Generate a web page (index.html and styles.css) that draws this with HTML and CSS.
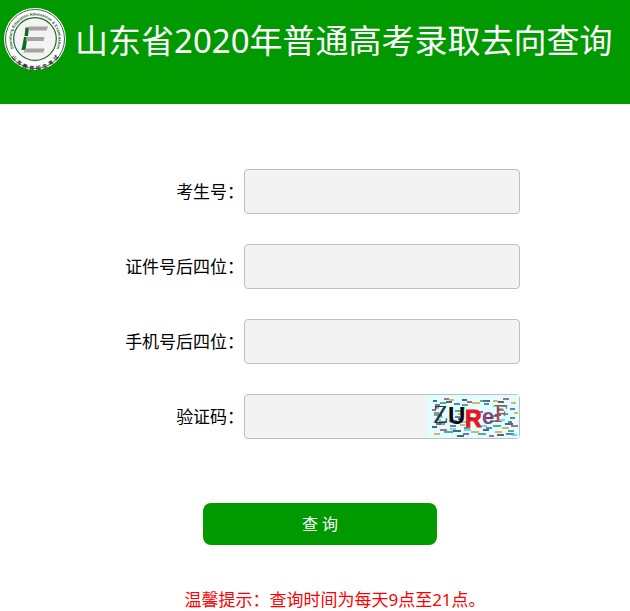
FILE: index.html
```html
<!DOCTYPE html>
<html lang="zh-CN">
<head>
<meta charset="utf-8">
<meta name="viewport" content="width=device-width, initial-scale=1">
<title>山东省2020年普通高考录取去向查询</title>
<link rel="stylesheet" href="styles.css">
</head>
<body>
<header class="banner">
  <svg class="logo" viewBox="0 0 64 64" aria-hidden="true">
    <defs>
      <path id="arc-top" d="M12 44A23.4 23.4 0 1 1 52 44"/>
      <path id="arc-bottom" d="M4 35A28 28 0 0 0 60 35"/>
    </defs>
    <circle cx="32" cy="32" r="31" fill="#fff"/>
    <circle cx="32" cy="32" r="29.5" fill="none" stroke="#49614d" stroke-width="1"/>
    <circle cx="32" cy="32" r="21.3" fill="#f3f3f3" stroke="#1d6b2c" stroke-width="1.2"/>
    <text class="ring-en"><textPath href="#arc-top" startOffset="50%">Shandong Education Admissions &amp; Examination</textPath></text>
    <text class="ring-cn"><textPath href="#arc-bottom" startOffset="50%">山&nbsp; 东&nbsp; 教&nbsp; 育&nbsp; 招&nbsp; 生&nbsp; 考&nbsp; 试</textPath></text>
    <path d="M22.5 20.5H26L25 29H21.5ZM21 30H24.5L22.5 43H18.5Z" fill="#087018"/>
    <path d="M26 19.5H45L43.5 23.5H25ZM23.5 30H41.5L40.5 34H22.5ZM22.5 41.5H41.5L40.5 45.5H20.5Z" fill="#a3a3a3"/>
  </svg>
  <h1 class="title">山东省2020年普通高考录取去向查询</h1>
</header>
<main>
  <form class="query">
    <div class="row">
      <label class="label" for="candidate">考生号：</label>
      <div class="field"><input class="input" id="candidate" type="text"></div>
    </div>
    <div class="row">
      <label class="label" for="idcard">证件号后四位：</label>
      <div class="field"><input class="input" id="idcard" type="text"></div>
    </div>
    <div class="row">
      <label class="label" for="phone">手机号后四位：</label>
      <div class="field"><input class="input" id="phone" type="text"></div>
    </div>
    <div class="row">
      <label class="label" for="code">验证码：</label>
      <div class="field">
        <input class="input" id="code" type="text">
        <svg class="captcha" viewBox="0 0 92 43" aria-hidden="true">
          <rect width="92" height="43" fill="#e2fdff"/>
          <g fill="none" stroke-width="1.4">
            <path d="M6 6h4m9 1h6m10-2h5m16 1h7m8 1h6M12 21h3m16 3h5m32-4h6m4 9h8M5 32h5m16 4h8m22-1h6M30 41h7m33-1h7" stroke="#24343a"/>
            <path d="M13 8h6m16 2h6m12-4h7m14 5h5M7 18h5m16-2h6m42 3h5M12 27h6m19 6h6m23-2h8M17 37h9m25 2h8m22-3h6" stroke="#2a9462"/>
            <path d="M22 5h5m18 3h8m13-2h5m13 2h5M8 13h4m19 6h6m34-5h5m11 4h4M9 25h5m19 5h5m37 3h7M7 39h6m31-2h8m16 0h7" stroke="#d89a3b"/>
            <path d="M8 10h5m14-1h6m24 0h5m21 5h5M28 22h5m18-5h5m27 6h5M9 29h5m9 2h6m52-4h4M36 39h6m17-6h6m14 6h8" stroke="#3156b5"/>
            <path d="M17 4h5m18 3h5m31-3h6M5 15h4m13 11h8m36-5h6m12 10h7M13 35h7m42 6h5" stroke="#9b3d62"/>
            <path d="M33 13h5m28-2h8m-2 14h6M11 22h5m19 5h5m14 4h6m25 9h5M23 34h6m8 1h7" stroke="#56c9dd"/>
          </g>
          <text class="code-serif" x="6" y="28" fill="#29324a">Z</text>
          <text class="code-sans" x="21" y="29" fill="#080812">U</text>
          <text class="code-bold" x="38" y="32" fill="#ed151b">R</text>
          <text class="code-e" x="55" y="29" fill="#874771">e</text>
          <text class="code-serif" x="67" y="27" fill="#a64b59">F</text>
          <path d="M7 20h8m8 7h5m13-4h5m14 0h5m6-8h6M12 29h6m45-3h7" stroke="#343844" stroke-width="1" fill="none"/>
        </svg>
      </div>
    </div>
    <button class="submit" type="button">查 询</button>
  </form>
  <p class="tip">温馨提示：查询时间为每天9点至21点。</p>
</main>
</body>
</html>
```
FILE: styles.css
```css
* {
  box-sizing: border-box;
}

body {
  margin: 0;
  background: #fff;
  color: #000;
  font-family: "Noto Sans", "Noto Sans CJK SC", sans-serif;
  font-size: 17px;
  line-height: 24px;
}

.banner {
  display: flex;
  align-items: flex-start;
  gap: 8px;
  min-height: 104px;
  padding: 7px 3px;
  background: #090;
}

.logo {
  flex: none;
  width: 64px;
  height: 64px;
}

.ring-en {
  font: bold 4px "Liberation Sans", sans-serif;
  fill: #174f24;
  text-anchor: middle;
}

.ring-cn {
  font: bold 5px "Noto Sans CJK SC", sans-serif;
  fill: #222;
  text-anchor: middle;
}

.title {
  margin: 0;
  color: #fff;
  font-size: 33px;
  font-weight: 400;
  line-height: 68px;
}

.query {
  display: flex;
  flex-direction: column;
  gap: 30px;
  padding-top: 65px;
}

.row {
  display: grid;
  grid-template-columns: 31fr 35fr 14fr;
  align-items: center;
}

.label {
  text-align: right;
  white-space: nowrap;
}

.field {
  position: relative;
}

.input {
  display: block;
  width: 100%;
  height: 45px;
  padding: 0 12px;
  border: 1px solid #bfbfbf;
  border-radius: 4px;
  background: #f3f3f3;
  font: inherit;
}

.captcha {
  position: absolute;
  top: 1px;
  right: 1px;
  width: 92px;
  height: 43px;
}

.code-serif {
  font: 25px "Liberation Serif", serif;
  stroke: currentColor;
  stroke-width: 0;
}

.code-sans {
  font: bold 24px "Liberation Sans", sans-serif;
}

.code-bold {
  font: bold 23px "Liberation Sans", sans-serif;
  stroke: #ed151b;
  stroke-width: 1;
}

.code-e {
  font: bold 22px "Liberation Sans", sans-serif;
}

.submit {
  align-self: center;
  width: 37%;
  height: 42px;
  margin: 34px 0 0 10px;
  border: 0;
  border-radius: 8px;
  background: #090;
  color: #fff;
  font: inherit;
  font-size: 16px;
}

.tip {
  margin: 43px 0 0;
  padding-left: 40px;
  color: #f00;
  text-align: center;
}
```
